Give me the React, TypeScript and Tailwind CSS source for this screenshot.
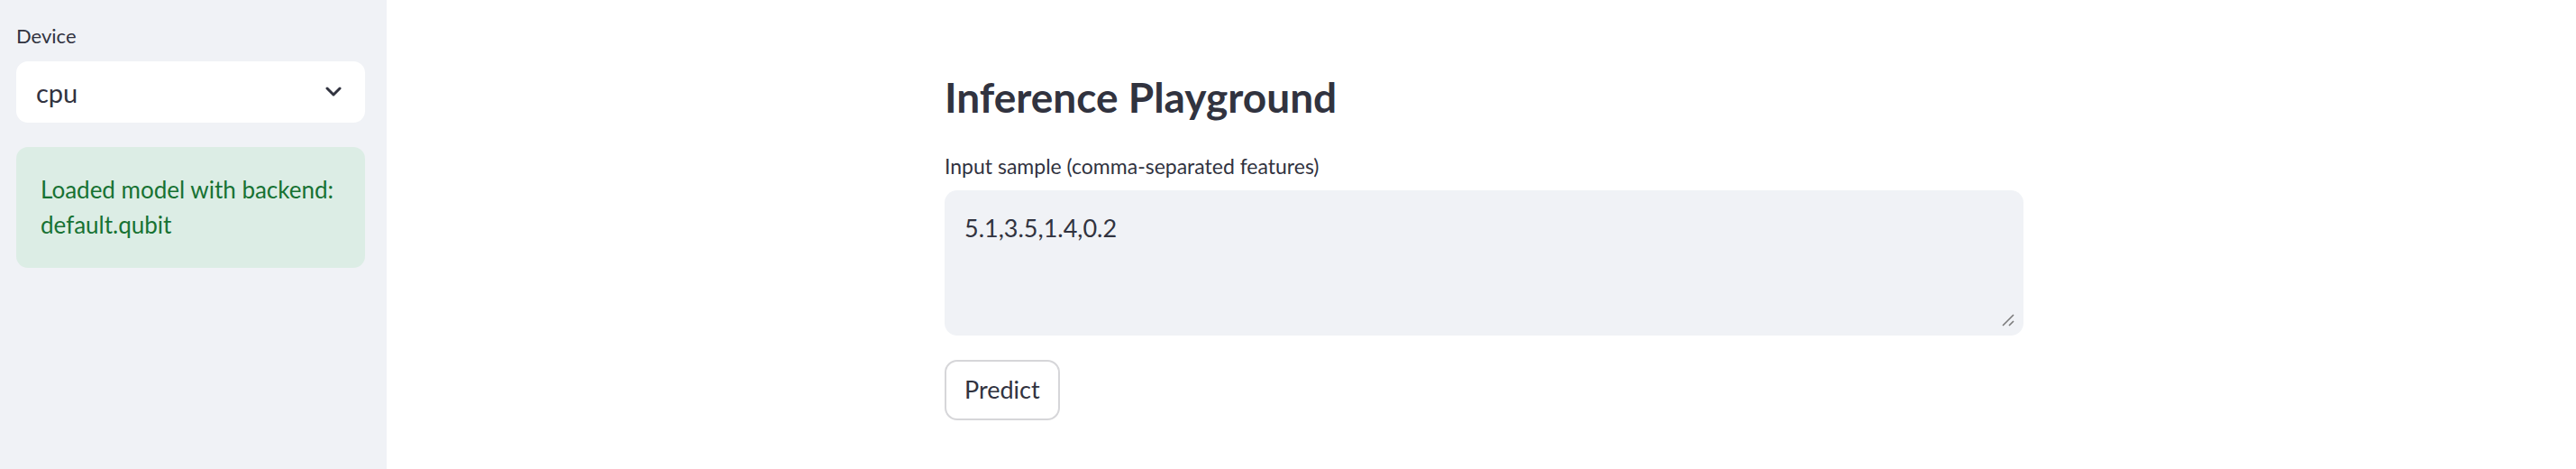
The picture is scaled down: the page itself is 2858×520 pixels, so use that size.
import React from 'react';

const font = { fontFamily: 'Lato, "Noto Sans", sans-serif' };

function Sidebar() {
  return (
    <aside className="w-[429px] shrink-0 bg-[#f0f2f6] pl-[18px] pr-[24px] pt-[26px]">
      <label className="block text-[22px] leading-[28px] text-[#31333f]">Device</label>
      <div className="mt-[14px] flex h-[68px] items-center justify-between rounded-[13px] bg-white pl-[22px] pr-[26px]">
        <span className="text-[29px] leading-none text-[#31333f]">cpu</span>
        <svg width="18" height="12" viewBox="0 0 18 12" fill="none">
          <path d="M2 2l7 7 7-7" stroke="#31333f" strokeWidth="3" strokeLinecap="round" strokeLinejoin="round" />
        </svg>
      </div>
      <div className="mt-[27px] whitespace-nowrap rounded-[13px] bg-[#dcede5] px-[27px] py-[28px] text-[26px] leading-[39px] text-[#177233]">
        Loaded model with backend:
        <br />
        default.qubit
      </div>
    </aside>
  );
}

function Main() {
  return (
    <main className="flex flex-1 justify-center bg-white pl-[6px]">
      <div className="w-[1197px] pt-[80px]">
        <h1 className="text-[46px] font-bold leading-[56px] text-[#31333f]">Inference Playground</h1>
        <label className="mt-[34px] block text-[23px] leading-[28px] text-[#31333f]">
          Input sample (comma-separated features)
        </label>
        <div className="relative mt-[13px] h-[161px] rounded-[14px] bg-[#f0f2f6]">
          <div className="px-[22px] pt-[22px] text-[27px] leading-[40px] text-[#31333f]">5.1,3.5,1.4,0.2</div>
          <svg className="absolute bottom-[9px] right-[9px]" width="16" height="16" viewBox="0 0 16 16" fill="none">
            <path d="M14 2L2 14M14 9L9 14" stroke="#7b7b7b" strokeWidth="1.6" />
          </svg>
        </div>
        <button className="mt-[27px] h-[67px] rounded-[14px] border-2 border-[#d6d6d9] bg-white px-[20px] text-[27px] text-[#31333f]">
          Predict
        </button>
      </div>
    </main>
  );
}

export default function App() {
  return (
    <div className="flex h-[520px] w-full overflow-hidden" style={font}>
      <Sidebar />
      <Main />
    </div>
  );
}
